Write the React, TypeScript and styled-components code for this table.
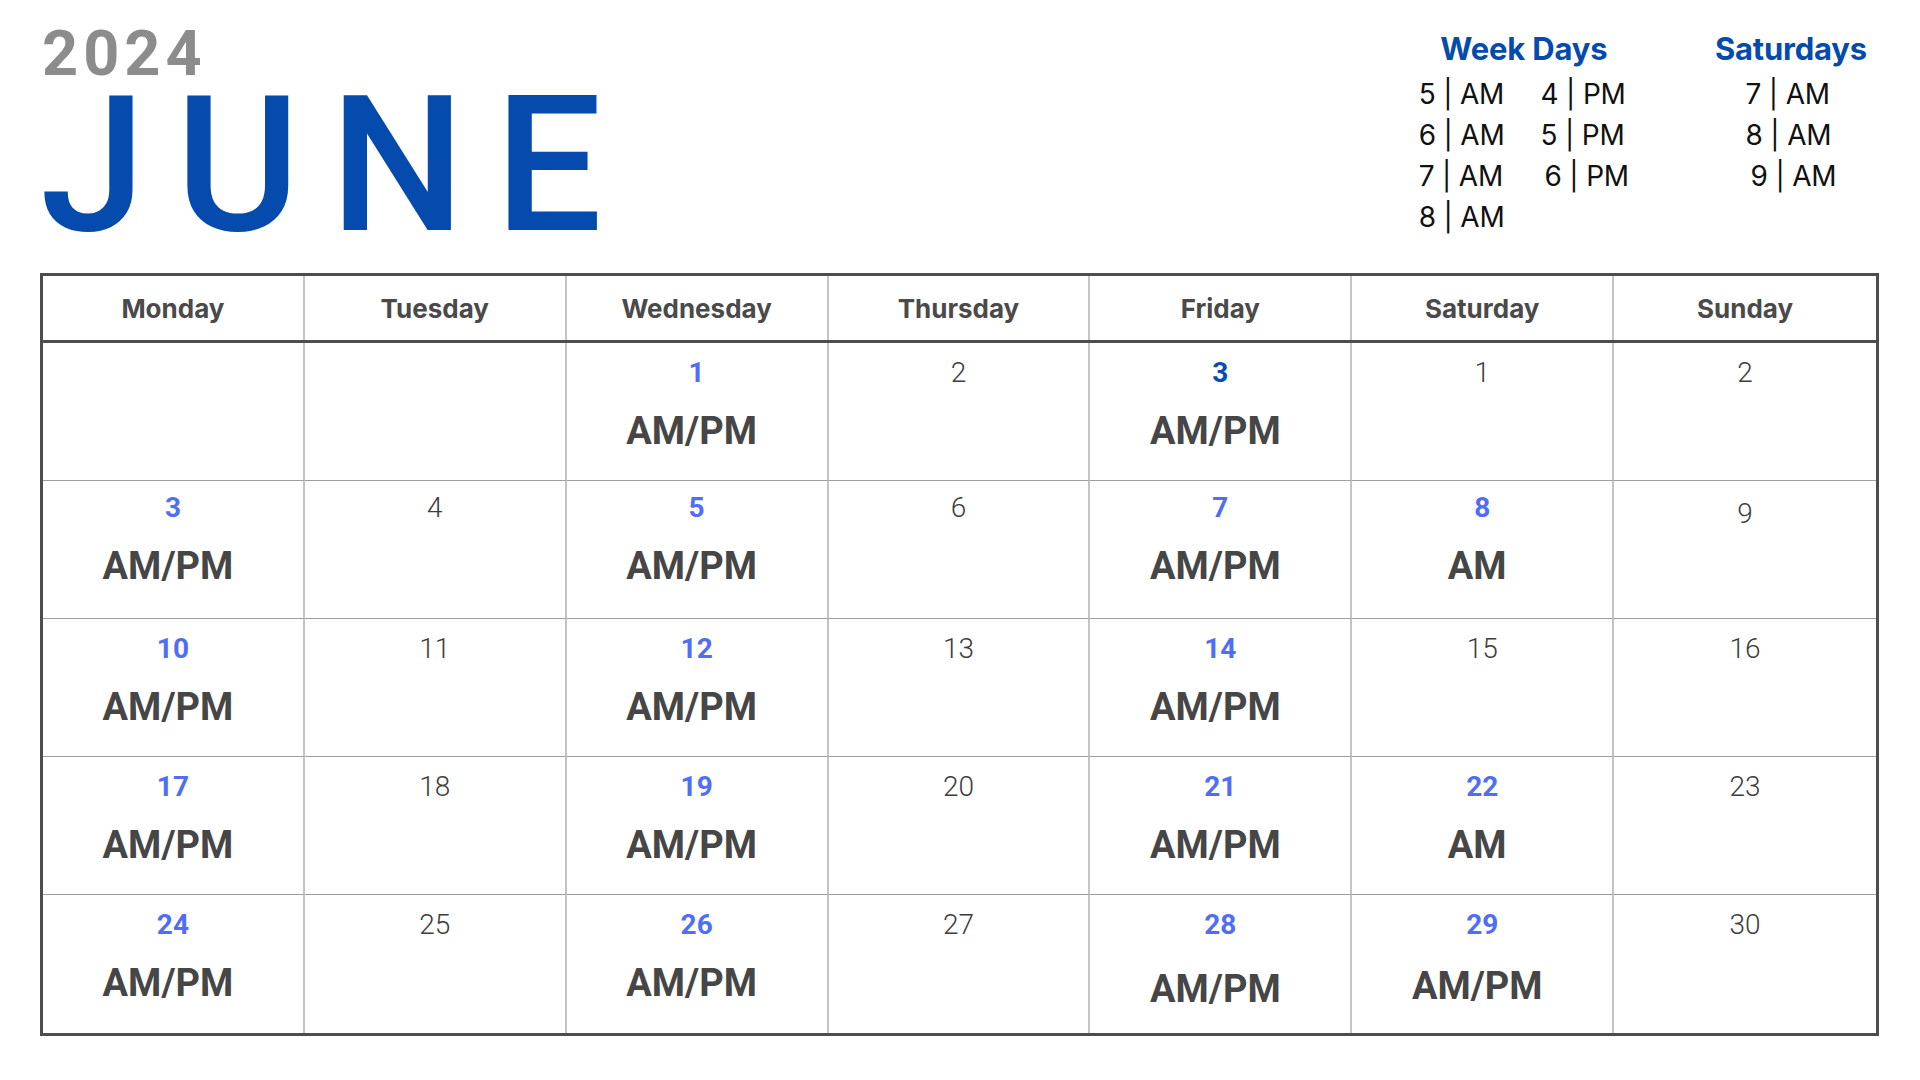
import React from "react";
import styled, { createGlobalStyle } from "styled-components";

const GlobalStyle = createGlobalStyle`
  html, body {
    margin: 0;
    padding: 0;
    background: #ffffff;
  }
  body {
    font-family: Roboto, "Liberation Sans", Arial, sans-serif;
    color: #222;
  }
  * { box-sizing: border-box; }
`;

const Page = styled.div`
  width: 1920px;
  height: 1080px;
  padding: 23px 41px 0 40px;
  display: flex;
  flex-direction: column;
`;

const Header = styled.header`
  display: flex;
  justify-content: space-between;
  align-items: flex-start;
  height: 250px;
`;

const TitleBlock = styled.div`
  display: flex;
  flex-direction: column;
`;

const Year = styled.div`
  font-family: Roboto, "Liberation Sans", sans-serif;
  font-weight: 700;
  font-size: 63px;
  line-height: 62px;
  letter-spacing: 5px;
  color: #8c8c8c;
  margin-left: 2px;
`;

const Month = styled.div`
  font-family: Roboto, "Liberation Sans", sans-serif;
  font-weight: 500;
  font-size: 190px;
  line-height: 158px;
  letter-spacing: 30px;
  color: #054bad;
  margin-top: 1px;
`;

const Legend = styled.div`
  display: flex;
  align-items: flex-start;
  gap: 86px;
  padding-right: 12px;
  padding-top: 7px;
`;

const LegendGroup = styled.div`
  display: flex;
  flex-direction: column;
  align-items: center;
`;

const LegendTitle = styled.div`
  font-family: Inter, "Noto Sans", sans-serif;
  font-weight: 700;
  font-size: 31px;
  line-height: 38px;
  color: #054bad;
  letter-spacing: -0.2px;
  margin-bottom: 6px;
`;

const TimeGrid = styled.div<{ $cols: number }>`
  display: grid;
  grid-template-columns: repeat(${(p) => p.$cols}, auto);
  column-gap: 36px;
`;

const TimeItem = styled.div<{ $shift?: number }>`
  font-family: Inter, "Noto Sans", sans-serif;
  font-weight: 400;
  font-size: 28px;
  line-height: 41px;
  letter-spacing: -0.2px;
  color: #111;
  white-space: nowrap;
  padding-left: ${(p) => p.$shift ?? 0}px;
`;

const Table = styled.div`
  border: 3px solid #4d4d4d;
  display: flex;
  flex-direction: column;
  width: 1839px;
`;

const HeadRow = styled.div`
  display: grid;
  grid-template-columns: repeat(7, 1fr);
  height: 67px;
  border-bottom: 3px solid #4d4d4d;
`;

const HeadCell = styled.div<{ $last?: boolean }>`
  display: flex;
  align-items: center;
  justify-content: center;
  font-family: Inter, "Noto Sans", sans-serif;
  font-weight: 700;
  font-size: 26px;
  color: #4a4a4a;
  border-right: ${(p) => (p.$last ? "none" : "2px solid #c4c4c4")};
`;

const BodyGrid = styled.div`
  display: grid;
  grid-template-columns: repeat(7, 1fr);
  grid-auto-rows: 138px;
`;

const Cell = styled.div<{ $last?: boolean; $bottom?: boolean }>`
  display: flex;
  flex-direction: column;
  align-items: center;
  padding-top: 13px;
  border-right: ${(p) => (p.$last ? "none" : "2px solid #c4c4c4")};
  border-bottom: ${(p) => (p.$bottom ? "none" : "1px solid #9e9e9e")};
`;

type Tone = "plain" | "blue" | "navy";

const DayNum = styled.div<{ $tone: Tone; $drop?: number }>`
  font-family: Roboto, "Liberation Sans", sans-serif;
  font-size: 28px;
  line-height: 34px;
  height: 34px;
  margin-top: ${(p) => p.$drop ?? 0}px;
  font-weight: ${(p) => (p.$tone === "plain" ? 300 : 700)};
  color: ${(p) =>
    p.$tone === "blue" ? "#4f6ef5" : p.$tone === "navy" ? "#0a4cad" : "#3d3d3d"};
`;

const Note = styled.div<{ $drop?: number }>`
  font-family: Roboto, "Liberation Sans", sans-serif;
  font-weight: 700;
  font-size: 38px;
  line-height: 48px;
  color: #464646;
  margin-top: ${(p) => 17 + (p.$drop ?? 0)}px;
  padding-right: 10px;
`;

type Day = {
  n?: string;
  tone?: Tone;
  note?: string;
  numDrop?: number;
  noteDrop?: number;
};

const days = ["Monday", "Tuesday", "Wednesday", "Thursday", "Friday", "Saturday", "Sunday"];

const AP = "AM/PM";

const weeks: Day[][] = [
  [
    {},
    {},
    { n: "1", tone: "blue", note: AP },
    { n: "2" },
    { n: "3", tone: "navy", note: AP },
    { n: "1" },
    { n: "2" },
  ],
  [
    { n: "3", tone: "blue", note: AP, numDrop: -3 },
    { n: "4", numDrop: -3 },
    { n: "5", tone: "blue", note: AP, numDrop: -3 },
    { n: "6", numDrop: -3 },
    { n: "7", tone: "blue", note: AP, numDrop: -3 },
    { n: "8", tone: "blue", note: "AM", numDrop: -3 },
    { n: "9", numDrop: 3 },
  ],
  [
    { n: "10", tone: "blue", note: AP },
    { n: "11" },
    { n: "12", tone: "blue", note: AP },
    { n: "13" },
    { n: "14", tone: "blue", note: AP },
    { n: "15" },
    { n: "16" },
  ],
  [
    { n: "17", tone: "blue", note: AP },
    { n: "18" },
    { n: "19", tone: "blue", note: AP },
    { n: "20" },
    { n: "21", tone: "blue", note: AP },
    { n: "22", tone: "blue", note: "AM" },
    { n: "23" },
  ],
  [
    { n: "24", tone: "blue", note: AP },
    { n: "25" },
    { n: "26", tone: "blue", note: AP },
    { n: "27" },
    { n: "28", tone: "blue", note: AP, noteDrop: 6 },
    { n: "29", tone: "blue", note: AP, noteDrop: 3 },
    { n: "30" },
  ],
];

const weekTimes: { text: string; shift?: number }[] = [
  { text: "5 | AM" },
  { text: "4 | PM" },
  { text: "6 | AM" },
  { text: "5 | PM" },
  { text: "7 | AM" },
  { text: "6 | PM", shift: 4 },
  { text: "8 | AM" },
];

const satTimes: { text: string; shift?: number }[] = [
  { text: "7 | AM" },
  { text: "8 | AM" },
  { text: "9 | AM", shift: 5 },
];

export default function App() {
  return (
    <>
      <GlobalStyle />
      <Page>
        <Header>
          <TitleBlock>
            <Year>2024</Year>
            <Month>JUNE</Month>
          </TitleBlock>
          <Legend>
            <LegendGroup>
              <LegendTitle>Week Days</LegendTitle>
              <TimeGrid $cols={2}>
                {weekTimes.map((t, i) => (
                  <TimeItem key={i} $shift={t.shift}>
                    {t.text}
                  </TimeItem>
                ))}
              </TimeGrid>
            </LegendGroup>
            <LegendGroup>
              <LegendTitle>Saturdays</LegendTitle>
              <TimeGrid $cols={1}>
                {satTimes.map((t, i) => (
                  <TimeItem key={i} $shift={t.shift}>
                    {t.text}
                  </TimeItem>
                ))}
              </TimeGrid>
            </LegendGroup>
          </Legend>
        </Header>
        <Table>
          <HeadRow>
            {days.map((d, i) => (
              <HeadCell key={d} $last={i === 6}>
                {d}
              </HeadCell>
            ))}
          </HeadRow>
          <BodyGrid>
            {weeks.map((week, wi) =>
              week.map((day, di) => (
                <Cell key={`${wi}-${di}`} $last={di === 6} $bottom={wi === weeks.length - 1}>
                  {day.n && (
                    <DayNum $tone={day.tone ?? "plain"} $drop={day.numDrop}>
                      {day.n}
                    </DayNum>
                  )}
                  {day.note && <Note $drop={day.noteDrop}>{day.note}</Note>}
                </Cell>
              ))
            )}
          </BodyGrid>
        </Table>
      </Page>
    </>
  );
}
